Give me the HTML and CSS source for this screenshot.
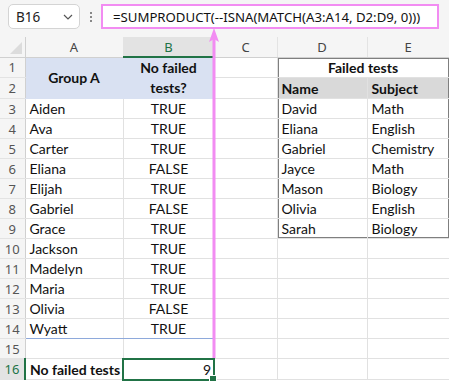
FILE: index.html
```html
<!DOCTYPE html>
<html lang="en">
<head>
  <meta charset="UTF-8" />
  <title>Failed tests</title>
  <link rel="stylesheet" href="styles.css">
</head>
<body>
  <div class="toolbar">
    <div class="name-box">
      <span>B16</span>
      <svg class="chevron" width="10" height="6" viewBox="0 0 10 6"><path d="M1 1 L5 5 L9 1" fill="none" stroke="#555" stroke-width="1.2"/></svg>
    </div>
    <div class="dots"><i></i><i></i><i></i></div>
    <div class="formula">=SUMPRODUCT(--ISNA(MATCH(A3:A14, D2:D9, 0)))</div>
  </div>

  <table class="sheet">
    <colgroup>
      <col class="c-row"><col class="c-a"><col class="c-b"><col class="c-c"><col class="c-d"><col class="c-e">
    </colgroup>
    <tr class="col-heads">
      <th class="corner"><span class="tri"></span></th>
      <th>A</th><th class="active">B</th><th>C</th><th>D</th><th>E</th>
    </tr>
    <tr>
      <th class="rn">1</th>
      <td class="blue bold center" rowspan="2">Group A</td>
      <td class="blue bold center wrap" rowspan="2">No failed<br>tests?</td>
      <td></td>
      <td class="ft-title bold center" colspan="2">Failed tests</td>
    </tr>
    <tr>
      <th class="rn">2</th>
      <td></td>
      <td class="ft-d grey bold">Name</td><td class="ft-e grey bold">Subject</td>
    </tr>
    <tr><th class="rn">3</th><td>Aiden</td><td class="center">TRUE</td><td></td><td class="ft-d">David</td><td class="ft-e">Math</td></tr>
    <tr><th class="rn">4</th><td>Ava</td><td class="center">TRUE</td><td></td><td class="ft-d">Eliana</td><td class="ft-e">English</td></tr>
    <tr><th class="rn">5</th><td>Carter</td><td class="center">TRUE</td><td></td><td class="ft-d">Gabriel</td><td class="ft-e">Chemistry</td></tr>
    <tr><th class="rn">6</th><td>Eliana</td><td class="center">FALSE</td><td></td><td class="ft-d">Jayce</td><td class="ft-e">Math</td></tr>
    <tr><th class="rn">7</th><td>Elijah</td><td class="center">TRUE</td><td></td><td class="ft-d">Mason</td><td class="ft-e">Biology</td></tr>
    <tr><th class="rn">8</th><td>Gabriel</td><td class="center">FALSE</td><td></td><td class="ft-d">Olivia</td><td class="ft-e">English</td></tr>
    <tr><th class="rn">9</th><td>Grace</td><td class="center">TRUE</td><td></td><td class="ft-d last">Sarah</td><td class="ft-e last">Biology</td></tr>
    <tr><th class="rn">10</th><td>Jackson</td><td class="center">TRUE</td><td></td><td></td><td></td></tr>
    <tr><th class="rn">11</th><td>Madelyn</td><td class="center">TRUE</td><td></td><td></td><td></td></tr>
    <tr><th class="rn">12</th><td>Maria</td><td class="center">TRUE</td><td></td><td></td><td></td></tr>
    <tr><th class="rn">13</th><td>Olivia</td><td class="center">FALSE</td><td></td><td></td><td></td></tr>
    <tr><th class="rn">14</th><td class="tb-end">Wyatt</td><td class="center tb-end">TRUE</td><td></td><td></td><td></td></tr>
    <tr><th class="rn">15</th><td></td><td></td><td></td><td></td><td></td></tr>
    <tr><th class="rn active-row">16</th><td class="bold">No failed tests</td><td class="selected">9<span class="handle"></span></td><td></td><td></td><td></td></tr>
  </table>

  <!-- arrow from formula to column B result -->
  <svg class="arrow" width="14" height="330" viewBox="0 0 14 330">
    <line x1="7" y1="10" x2="7" y2="330" stroke="#f28cf2" stroke-width="3"/>
    <path d="M7 0 L12 14 L7 11 L2 14 Z" fill="#f28cf2"/>
  </svg>
</body>
</html>
```

FILE: styles.css
```css
body {
  margin: 0;
  background: #f5f5f5;
  font-family: 'Lato', 'Liberation Sans', sans-serif;
  position: relative;
  width: 449px;
  height: 381px;
  overflow: hidden;
}

.toolbar {
  display: flex;
  align-items: center;
  height: 37px;
  padding: 0 10px 4px 8px;
  box-sizing: border-box;
}

.name-box {
  width: 72px;
  height: 25px;
  box-sizing: border-box;
  background: #ffffff;
  border: 1px solid #d4d4d4;
  border-radius: 5px;
  display: flex;
  align-items: center;
  justify-content: space-between;
  padding: 0 6px 0 7px;
  font-family: 'Noto Sans', sans-serif;
  font-size: 13.5px;
  color: #222;
}

.chevron {
  margin-top: 1px;
}

.dots {
  width: 21px;
  display: flex;
  flex-direction: column;
  align-items: center;
  gap: 2px;
}

.dots i {
  width: 2px;
  height: 2px;
  background: #888;
}

.formula {
  flex: 1;
  height: 25px;
  box-sizing: border-box;
  background: #ffffff;
  border: 2px solid #f28cf2;
  padding-left: 10px;
  display: flex;
  align-items: center;
  font-family: 'Noto Sans', sans-serif;
  font-size: 13.2px;
  color: #111;
  white-space: nowrap;
  overflow: hidden;
}

.sheet {
  border-collapse: collapse;
  table-layout: fixed;
  width: 449px;
  background: #ffffff;
  font-size: 14px;
  color: #111;
}

.c-row { width: 25px; }
.c-a { width: 98px; }
.c-b { width: 91px; }
.c-c { width: 63px; }
.c-d { width: 90px; }
.c-e { width: 82px; }

.sheet tr {
  height: 20px;
}

.sheet td {
  border-right: 1px solid #e1e1e1;
  border-bottom: 1px solid #e1e1e1;
  padding: 0 4px;
  white-space: nowrap;
  overflow: hidden;
  line-height: 19px;
}

.col-heads {
  height: 21px;
}

.col-heads th {
  background: #f5f5f5;
  border-right: 1px solid #e3e3e3;
  border-bottom: 1px solid #d0d0d0;
  font-weight: normal;
  font-family: 'Noto Sans', sans-serif;
  font-size: 13px;
  color: #444;
  padding: 0;
}

.col-heads th.active {
  background: #e3e3e3;
  border-bottom: 2px solid #217346;
  color: #217346;
}

.corner {
  position: relative;
  border-right-color: #d0d0d0 !important;
}

.tri {
  position: absolute;
  right: 3px;
  bottom: 3px;
  width: 0;
  height: 0;
  border-left: 12px solid transparent;
  border-bottom: 12px solid #dcdcdc;
}

.rn {
  background: #f5f5f5;
  border-right: 1px solid #d0d0d0;
  border-bottom: 1px solid #e3e3e3;
  font-weight: normal;
  font-family: 'Noto Sans', sans-serif;
  font-size: 13px;
  color: #555;
  padding: 0;
  text-align: center;
}

.rn.active-row {
  background: #e3e3e3;
  color: #217346;
  border-right: 2px solid #217346;
}

.center { text-align: center; }
.bold { font-weight: bold; }

.wrap {
  white-space: normal !important;
  line-height: 20px !important;
}

.blue {
  background: #d9e1f2;
  border-right-color: #d9e1f2 !important;
  border-bottom-color: #d9e1f2 !important;
}

.tb-end {
  border-bottom: 1px solid #8ea9db !important;
}

/* the framed "Failed tests" table in D1:E9 */
.ft-title {
  box-shadow: inset 1px 1px 0 #7f7f7f, inset -1px 0 0 #7f7f7f;
}

.ft-d {
  box-shadow: inset 1px 0 0 #7f7f7f;
}

.ft-e {
  box-shadow: inset -1px 0 0 #7f7f7f;
}

.ft-d.last {
  box-shadow: inset 1px 0 0 #7f7f7f, inset 0 -1px 0 #7f7f7f;
}

.ft-e.last {
  box-shadow: inset -1px 0 0 #7f7f7f, inset 0 -1px 0 #7f7f7f;
}

.grey {
  background: #d9d9d9;
}

.sheet td.selected {
  position: relative;
  border: 2px solid #217346;
  text-align: right;
  padding-right: 2px;
  overflow: visible;
}

.handle {
  position: absolute;
  right: -4px;
  bottom: -4px;
  width: 6px;
  height: 6px;
  background: #217346;
  border: 1px solid #ffffff;
}

.arrow {
  position: absolute;
  left: 207px;
  top: 28px;
}
```
